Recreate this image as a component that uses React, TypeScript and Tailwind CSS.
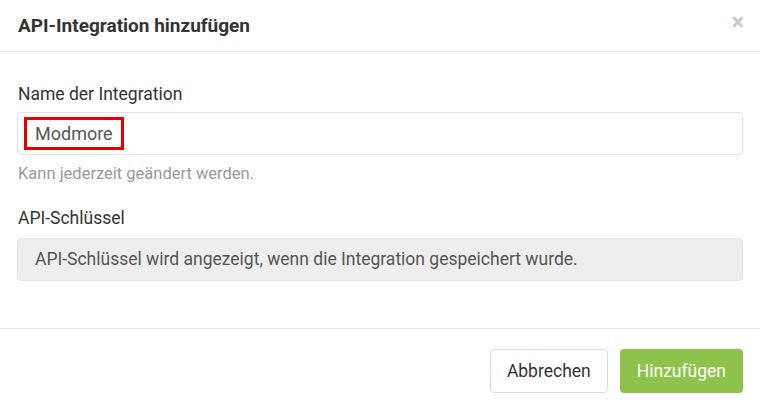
export default function App() {
    return (
        <div className="w-[760px] h-[407px] bg-white text-[#333] font-['Roboto',sans-serif]">
            <div className="flex items-center justify-between h-[52px] px-[18px] border-b border-[#e5e5e5]">
                <h4 className="text-[19px] font-bold leading-none">API-Integration hinzufügen</h4>
                <button className="text-[#c8c8c8] text-[23px] font-bold leading-none -mt-[6px] mr-[-2px]">×</button>
            </div>
            <div className="px-[17px] pt-[30px] pb-[47px]">
                <label className="block text-[17.5px] leading-[24px] mb-[6px] px-px">Name der Integration</label>
                <div className="h-[43px] border border-[#e3e3e3] rounded-[4px] flex items-center px-[6px]">
                    <span className="border-[3px] border-[#e00000] h-[33px] px-[8px] flex items-center text-[18px] text-[#555]">Modmore</span>
                </div>
                <p className="text-[16.5px] leading-[20px] text-[#999] mt-[9px] px-px">Kann jederzeit geändert werden.</p>
                <label className="block text-[17.5px] leading-[24px] mt-[22px] mb-[8px] px-px">API-Schlüssel</label>
                <div className="h-[43px] border border-[#e3e3e3] rounded-[4px] bg-[#eeeeee] flex items-center px-[17px] text-[17.5px] text-[#555]">
                    API-Schlüssel wird angezeigt, wenn die Integration gespeichert wurde.
                </div>
            </div>
            <div className="border-t border-[#e5e5e5] flex justify-end gap-[12px] px-[17px] pt-[20px]">
                <button className="h-[44px] px-[16px] border border-[#dcdcdc] rounded-[4px] bg-white text-[17.5px] text-[#333]">Abbrechen</button>
                <button className="h-[44px] px-[17px] rounded-[4px] bg-[#8dc34a] text-[17.5px] text-white">Hinzufügen</button>
            </div>
        </div>
    );
}
